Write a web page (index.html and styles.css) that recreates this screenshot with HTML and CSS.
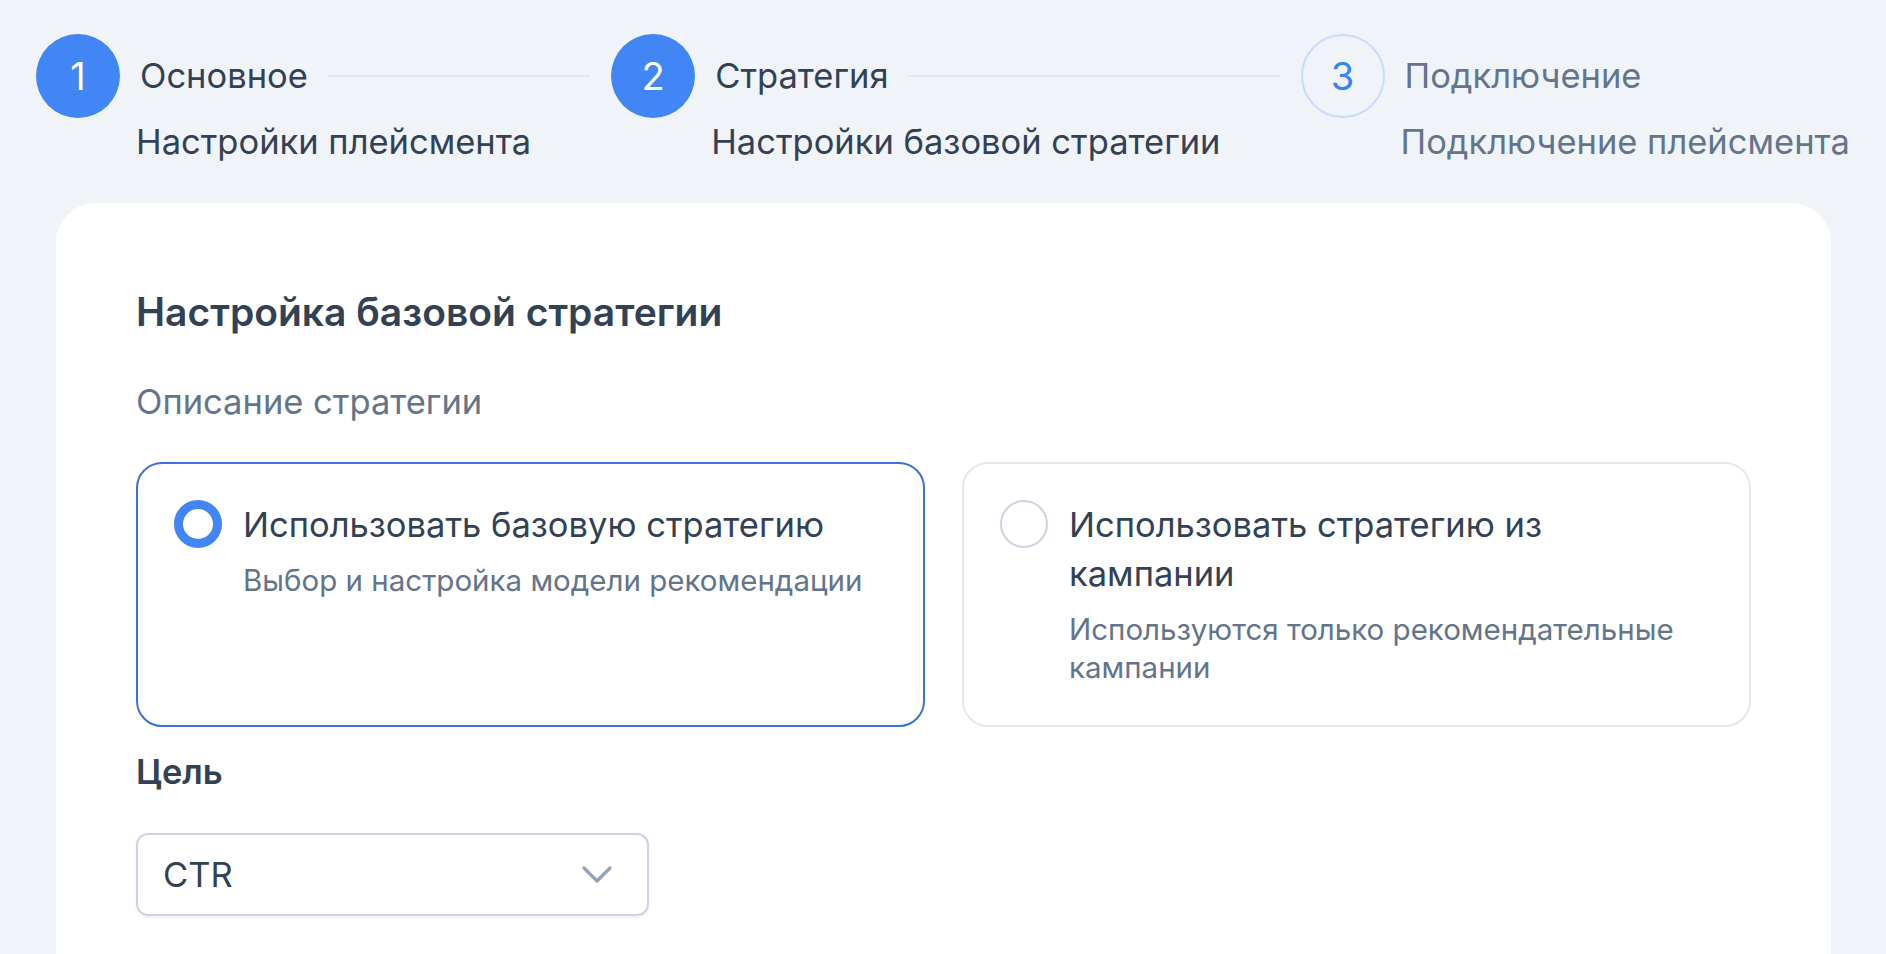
FILE: index.html
```
<!DOCTYPE html>
<html lang="ru">
<head>
    <meta charset="UTF-8">
    <title>Стратегия</title>
    <link rel="stylesheet" href="styles.css">
</head>
<body>

    <!-- Шаги мастера -->
    <div class="steps">
        <div class="step done">
            <div class="step-icon">1</div>
            <div class="step-body">
                <div class="step-head">
                    <span class="step-title">Основное</span>
                    <span class="step-line"></span>
                </div>
                <div class="step-desc">Настройки плейсмента</div>
            </div>
        </div>
        <div class="step done">
            <div class="step-icon">2</div>
            <div class="step-body">
                <div class="step-head">
                    <span class="step-title">Стратегия</span>
                    <span class="step-line"></span>
                </div>
                <div class="step-desc">Настройки базовой стратегии</div>
            </div>
        </div>
        <div class="step wait">
            <div class="step-icon">3</div>
            <div class="step-body">
                <div class="step-head">
                    <span class="step-title">Подключение</span>
                </div>
                <div class="step-desc">Подключение плейсмента</div>
            </div>
        </div>
    </div>

    <!-- Карточка с формой -->
    <div class="card">
        <h2 class="card-title">Настройка базовой стратегии</h2>
        <div class="card-hint">Описание стратегии</div>

        <div class="options">
            <label class="option active">
                <span class="radio"></span>
                <span class="option-text">
                    <span class="option-title">Использовать базовую стратегию</span>
                    <span class="option-desc">Выбор и настройка модели рекомендации</span>
                </span>
            </label>
            <label class="option">
                <span class="radio"></span>
                <span class="option-text">
                    <span class="option-title">Использовать стратегию из кампании</span>
                    <span class="option-desc">Используются только рекомендательные кампании</span>
                </span>
            </label>
        </div>

        <div class="field-label">Цель</div>
        <div class="select">
            <span class="select-value">CTR</span>
            <svg class="select-arrow" width="32" height="18" viewBox="0 0 32 18">
                <polyline points="3,2 16,15 29,2" fill="none" stroke="#94a3b8" stroke-width="3.2" stroke-linecap="round" stroke-linejoin="round"/>
            </svg>
        </div>
    </div>

</body>
</html>
```

FILE: styles.css
```
/* Общие стили */
body {
    margin: 0;
    background-color: #f0f4f9;
    font-family: "Inter", "Noto Sans", sans-serif;
    color: #334155;
}

/* Шаги */
.steps {
    display: flex;
    padding: 34px 36px 0;
}

.step {
    display: flex;
    flex: 1 1 auto;
    margin-right: 21px;
}

.step:last-child {
    flex: none;
    margin-right: 0;
}

.step-icon {
    width: 84px;
    height: 84px;
    border-radius: 50%;
    flex: none;
    display: flex;
    align-items: center;
    justify-content: center;
    font-size: 38px;
    box-sizing: border-box;
}

.done .step-icon {
    background-color: #4285f4;
    color: #fff;
}

.wait .step-icon {
    border: 2px solid #c7dcfd;
    color: #3b82f6;
}

.step-body {
    flex: 1;
    margin-left: 16px;
    display: flex;
    flex-direction: column;
}

.step-head {
    height: 84px;
    display: flex;
    align-items: center;
}

.step-title {
    font-size: 34.5px;
    line-height: 48px;
    padding-left: 4px;
    white-space: nowrap;
}

.step-line {
    flex: 1;
    height: 2px;
    margin-left: 20px;
    background-color: #e2e8f0;
}

.step-desc {
    font-size: 34.5px;
    line-height: 48px;
    white-space: nowrap;
}

.wait .step-title,
.wait .step-desc {
    color: #64748b;
}

/* Карточка */
.card {
    margin: 37px 55px 0 56px;
    padding: 82px 80px 80px;
    background-color: #fff;
    border-radius: 40px;
}

.card-title {
    margin: 0;
    font-size: 39px;
    line-height: 54px;
    font-weight: 600;
}

.card-hint {
    margin-top: 39px;
    font-size: 34.5px;
    line-height: 48px;
    color: #64748b;
}

.options {
    display: grid;
    grid-template-columns: 1fr 1fr;
    gap: 37px;
    margin-top: 36px;
}

.option {
    display: flex;
    align-items: flex-start;
    gap: 21px;
    padding: 36px 36px 39px;
    border: 2px solid #e2e8f0;
    border-radius: 26px;
    cursor: pointer;
}

.option.active {
    border-color: #3a72d8;
}

.radio {
    width: 48px;
    height: 48px;
    flex: none;
    border-radius: 50%;
    border: 2px solid #cbd5e1;
    box-sizing: border-box;
    background-color: #fff;
}

.option.active .radio {
    border: 9px solid #4285f4;
}

.option-text {
    display: flex;
    flex-direction: column;
}

.option-title {
    max-width: 610px;
    font-size: 34.5px;
    line-height: 49px;
}

.option-desc {
    margin-top: 12px;
    font-size: 29.5px;
    line-height: 38px;
    color: #64748b;
}

.field-label {
    margin-top: 21px;
    font-size: 34.5px;
    line-height: 48px;
    font-weight: 600;
}

.select {
    width: 513px;
    height: 83px;
    margin-top: 37px;
    box-sizing: border-box;
    display: flex;
    align-items: center;
    justify-content: space-between;
    padding: 0 34px 0 25px;
    border: 2px solid #cbd5e1;
    border-radius: 12px;
    box-shadow: 0 2px 4px rgba(15, 23, 42, 0.06);
}

.select-value {
    font-size: 34.5px;
    line-height: 48px;
}
```
